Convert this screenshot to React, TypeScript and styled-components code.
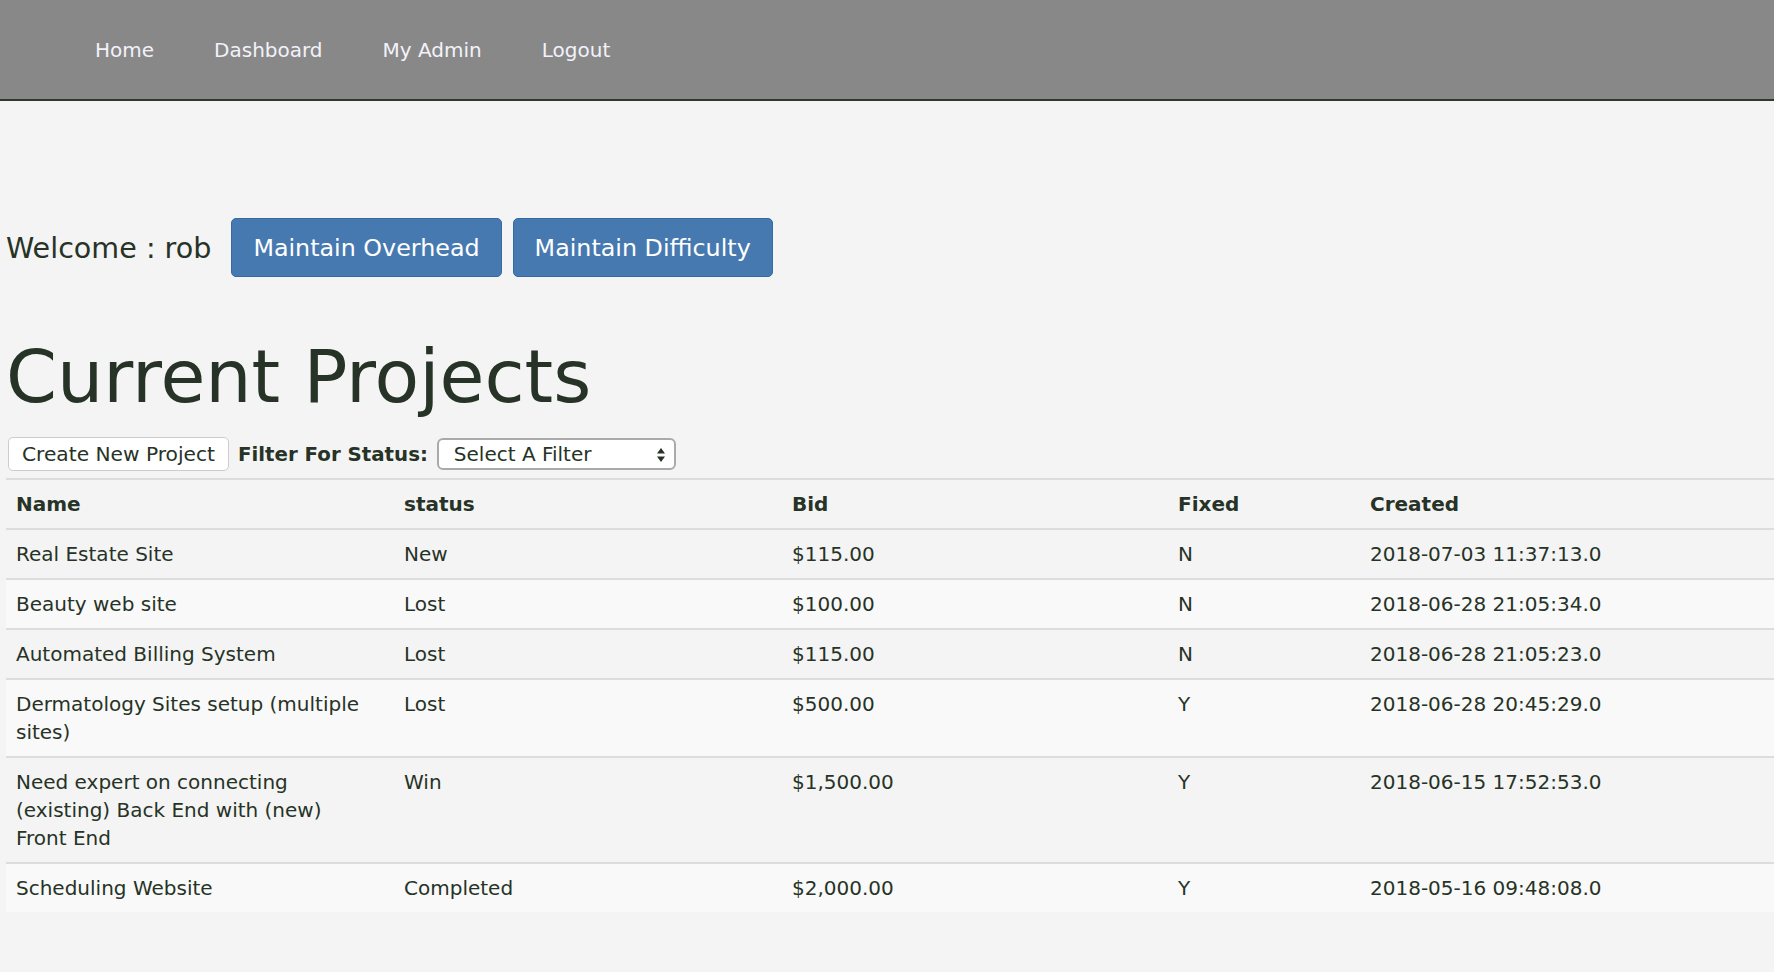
import React from "react";
import styled, { createGlobalStyle } from "styled-components";

const Global = createGlobalStyle`
  html, body { margin: 0; padding: 0; background: #f4f4f4; }
  body { font-family: "DejaVu Sans", Verdana, sans-serif; color: #263326; }
`;

const NavBar = styled.nav`
  height: 99px;
  background: #888888;
  border-bottom: 2px solid #2d3a2d;
  display: flex;
  align-items: center;
  padding-left: 95px;
  gap: 60px;
`;

const NavLink = styled.a`
  color: #f2f2fa;
  font-size: 20px;
  text-decoration: none;
`;

const Main = styled.main`
  padding: 117px 0 0 6px;
`;

const WelcomeRow = styled.div`
  display: flex;
  align-items: center;
  gap: 11px;
`;

const WelcomeText = styled.span`
  font-size: 28.6px;
  margin-right: 9px;
`;

const PrimaryButton = styled.button`
  font-family: inherit;
  font-size: 23.8px;
  color: #ffffff;
  background: #4779b1;
  border: 1px solid #356aa5;
  border-radius: 5px;
  height: 59px;
  padding: 0 21px;
  cursor: pointer;
`;

const Heading = styled.h1`
  font-size: 73px;
  font-weight: normal;
  margin: 60px 0 0 0;
  line-height: 1.1;
`;

const Toolbar = styled.div`
  display: flex;
  align-items: center;
  margin-top: 20px;
  padding-left: 2px;
  gap: 9px;
`;

const PlainButton = styled.button`
  font-family: inherit;
  font-size: 20.2px;
  color: #263326;
  background: #ffffff;
  border: 1px solid #cccccc;
  border-radius: 5px;
  height: 34px;
  padding: 0 13px;
`;

const FilterLabel = styled.label`
  font-size: 19.8px;
  font-weight: bold;
`;

const SelectBox = styled.div`
  position: relative;
  width: 239px;
  height: 32px;
  box-sizing: border-box;
  background: #ffffff;
  border: 2px solid #aaaaaa;
  border-radius: 6px;
  display: flex;
  align-items: center;
  padding-left: 15px;
  font-size: 20px;
`;

const Arrows = styled.svg`
  position: absolute;
  right: 8px;
  top: 7px;
`;

const Table = styled.table`
  margin-top: 7px;
  width: 1768px;
  border-collapse: collapse;
  font-size: 20px;
`;

const Row = styled.tr<{ $light?: boolean }>`
  background: ${(p) => (p.$light ? "#f9f9f9" : "#f4f4f4")};
`;

const HeadCell = styled.th<{ $w: number }>`
  width: ${(p) => p.$w}px;
  text-align: left;
  font-weight: bold;
  padding: 10px 20px 10px 10px;
  line-height: 28px;
  border-top: 2px solid #dddddd;
  border-bottom: 2px solid #dddddd;
  box-sizing: border-box;
`;

const Cell = styled.td`
  padding: 10px 20px 10px 10px;
  line-height: 28px;
  vertical-align: top;
  border-top: 2px solid #dddddd;
`;

const projects = [
  ["Real Estate Site", "New", "$115.00", "N", "2018-07-03 11:37:13.0"],
  ["Beauty web site", "Lost", "$100.00", "N", "2018-06-28 21:05:34.0"],
  ["Automated Billing System", "Lost", "$115.00", "N", "2018-06-28 21:05:23.0"],
  ["Dermatology Sites setup (multiple sites)", "Lost", "$500.00", "Y", "2018-06-28 20:45:29.0"],
  ["Need expert on connecting (existing) Back End with (new) Front End", "Win", "$1,500.00", "Y", "2018-06-15 17:52:53.0"],
  ["Scheduling Website", "Completed", "$2,000.00", "Y", "2018-05-16 09:48:08.0"],
];

const columns: [string, number][] = [
  ["Name", 388],
  ["status", 388],
  ["Bid", 386],
  ["Fixed", 192],
  ["Created", 414],
];

export default function App() {
  return (
    <>
      <Global />
      <NavBar>
        <NavLink href="#">Home</NavLink>
        <NavLink href="#">Dashboard</NavLink>
        <NavLink href="#">My Admin</NavLink>
        <NavLink href="#">Logout</NavLink>
      </NavBar>
      <Main>
        <WelcomeRow>
          <WelcomeText>Welcome : rob</WelcomeText>
          <PrimaryButton>Maintain Overhead</PrimaryButton>
          <PrimaryButton>Maintain Difficulty</PrimaryButton>
        </WelcomeRow>
        <Heading>Current Projects</Heading>
        <Toolbar>
          <PlainButton>Create New Project</PlainButton>
          <FilterLabel>Filter For Status:</FilterLabel>
          <SelectBox>
            Select A Filter
            <Arrows width="10" height="16" viewBox="0 0 10 16">
              <polygon points="5,1 9,6.5 1,6.5" fill="#263326" />
              <polygon points="5,15 9,9.5 1,9.5" fill="#263326" />
            </Arrows>
          </SelectBox>
        </Toolbar>
        <Table>
          <thead>
            <Row>
              {columns.map(([c, w]) => (
                <HeadCell key={c} $w={w}>
                  {c}
                </HeadCell>
              ))}
            </Row>
          </thead>
          <tbody>
            {projects.map((p, i) => (
              <Row key={i} $light={i % 2 === 1}>
                {p.map((v, j) => (
                  <Cell key={j}>{v}</Cell>
                ))}
              </Row>
            ))}
          </tbody>
        </Table>
      </Main>
    </>
  );
}
